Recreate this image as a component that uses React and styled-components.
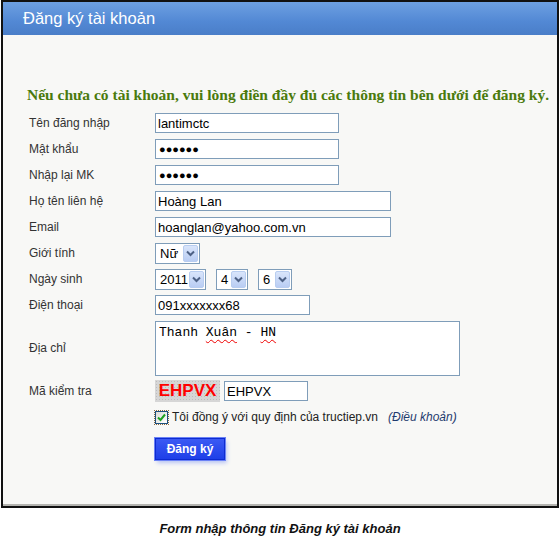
import React from 'react';
import styled, { createGlobalStyle } from 'styled-components';

const GlobalStyle = createGlobalStyle`
  body {
    margin: 0;
    background: #ffffff;
    font-family: "Liberation Sans", Arial, sans-serif;
  }
`;

const Frame = styled.div`
  margin-left: 1px;
  width: 554px;
  height: 504px;
  border: 2px solid #111;
  background: #f8f8f6;
  box-shadow: inset 0 -2px 0 #b4b4b0;
  display: flex;
  flex-direction: column;
`;

const Header = styled.div`
  height: 33px;
  background: linear-gradient(#6da0e2, #5288d4 60%, #4a7ec8);
  display: flex;
  align-items: center;
  padding-left: 20px;
  color: #fff;
  font-size: 16.5px;
`;

const Body = styled.div`
  padding: 48px 0 0 24px;
  display: flex;
  flex-direction: column;
`;

const Intro = styled.div`
  font-family: "Liberation Serif", "Times New Roman", serif;
  font-weight: bold;
  font-size: 15.5px;
  color: #4a7a0c;
  height: 24px;
  line-height: 24px;
  margin-bottom: 3px;
`;

const Row = styled.div`
  display: flex;
  align-items: center;
  height: ${(p) => p.h || 26}px;
`;

const Label = styled.div`
  width: 126px;
  padding-left: 2px;
  font-size: 12px;
  color: #333;
`;

const Field = styled.div`
  display: flex;
  align-items: center;
  gap: ${(p) => p.gap || 0}px;
`;

const Input = styled.div`
  box-sizing: border-box;
  width: ${(p) => p.w}px;
  height: 20px;
  border: 1px solid #7f9db9;
  background: #fff;
  padding-left: 2px;
  font-size: 13px;
  color: #000;
  display: flex;
  align-items: center;
  white-space: nowrap;
`;

const Dots = styled.span`
  font-size: 11px;
  padding-left: 1px;
`;

const Area = styled.div`
  box-sizing: border-box;
  width: 305px;
  height: 55px;
  border: 1px solid #7f9db9;
  background: #fff;
  padding: 3px 0 0 3px;
  font-family: "Liberation Mono", "Courier New", monospace;
  font-size: 13px;
  color: #000;
`;

const Spell = styled.span`
  text-decoration: underline wavy #e00;
  text-underline-offset: 3px;
  text-decoration-thickness: 1px;
`;

const Select = styled.div`
  box-sizing: border-box;
  width: ${(p) => p.w}px;
  height: 21px;
  border: 1px solid #7f9db9;
  background: #fff;
  display: flex;
  align-items: center;
  justify-content: space-between;
  padding: 1px;
  font-size: 13px;
  color: #000;
`;

const SelectText = styled.span`
  padding-left: 3px;
`;

const Arrow = styled.span`
  width: 15px;
  height: 17px;
  box-sizing: border-box;
  border: 1px solid #b8cdf0;
  border-radius: 2px;
  background: linear-gradient(#d9e5fb, #b9cdf3);
  display: flex;
  align-items: center;
  justify-content: center;
`;

const Captcha = styled.div`
  width: 65px;
  height: 22px;
  background-color: #d6d6d6;
  background-image: radial-gradient(#bdbdbd 0.8px, transparent 0.9px);
  background-size: 3px 3px;
  color: #f00;
  font-weight: bold;
  font-size: 17px;
  display: flex;
  align-items: center;
  justify-content: center;
`;

const Agree = styled.label`
  display: flex;
  align-items: center;
  font-size: 12px;
  color: #222;
`;

const Box = styled.span`
  width: 13px;
  height: 13px;
  box-sizing: border-box;
  border: 1px solid #1c5180;
  background: linear-gradient(135deg, #dcdcd6, #fff);
  outline: 1px dotted #8a6a40;
  display: flex;
  align-items: center;
  justify-content: center;
  margin-right: 4px;
`;

const Terms = styled.span`
  font-style: italic;
  color: #1f3b6e;
  margin-left: 10px;
`;

const Button = styled.button`
  width: 70px;
  height: 22px;
  border: 1px solid #0d2bd0;
  background: linear-gradient(#3b5af4, #1e3fe8);
  box-shadow: 0 0 0 1px #6b82f6, 2px 3px 4px #b8c4f4;
  color: #fff;
  font-family: "Liberation Sans", Arial, sans-serif;
  font-weight: bold;
  font-size: 12px;
  padding: 0;
  margin-top: 2px;
`;

const Caption = styled.div`
  text-align: center;
  font-style: italic;
  font-weight: bold;
  font-size: 13px;
  color: #111;
  margin-top: 13px;
`;

const Chevron = () => (
  <svg width="9" height="7" viewBox="0 0 9 7">
    <path d="M1 1.5 L4.5 5 L8 1.5" fill="none" stroke="#4d6185" strokeWidth="2" />
  </svg>
);

const Check = () => (
  <svg width="9" height="9" viewBox="0 0 9 9">
    <path d="M1 4.5 L3.5 7 L8 1.5" fill="none" stroke="#21a121" strokeWidth="2" />
  </svg>
);

const DropDown = ({ w, value }) => (
  <Select w={w}>
    <SelectText>{value}</SelectText>
    <Arrow>
      <Chevron />
    </Arrow>
  </Select>
);

export default function App() {
  return (
    <>
      <GlobalStyle />
      <Frame>
        <Header>Đăng ký tài khoản</Header>
        <Body>
          <Intro>Nếu chưa có tài khoản, vui lòng điền đầy đủ các thông tin bên dưới để đăng ký.</Intro>
          <Row>
            <Label>Tên đăng nhập</Label>
            <Input w={184}>lantimctc</Input>
          </Row>
          <Row>
            <Label>Mật khẩu</Label>
            <Input w={184}><Dots>●●●●●●</Dots></Input>
          </Row>
          <Row>
            <Label>Nhập lại MK</Label>
            <Input w={184}><Dots>●●●●●●</Dots></Input>
          </Row>
          <Row>
            <Label>Họ tên liên hệ</Label>
            <Input w={236}>Hoàng Lan</Input>
          </Row>
          <Row>
            <Label>Email</Label>
            <Input w={236}>hoanglan@yahoo.com.vn</Input>
          </Row>
          <Row>
            <Label>Giới tính</Label>
            <DropDown w={45} value="Nữ" />
          </Row>
          <Row>
            <Label>Ngày sinh</Label>
            <Field gap={10}>
              <DropDown w={51} value="2011" />
              <DropDown w={32} value="4" />
              <DropDown w={34} value="6" />
            </Field>
          </Row>
          <Row>
            <Label>Điện thoại</Label>
            <Input w={155}>091xxxxxxx68</Input>
          </Row>
          <Row h={60}>
            <Label>Địa chỉ</Label>
            <Area>
              Thanh <Spell>Xuân</Spell> - <Spell>HN</Spell>
            </Area>
          </Row>
          <Row>
            <Label>Mã kiểm tra</Label>
            <Field gap={4}>
              <Captcha>EHPVX</Captcha>
              <Input w={84}>EHPVX</Input>
            </Field>
          </Row>
          <Row>
            <Label />
            <Agree>
              <Box><Check /></Box>
              Tôi đồng ý với quy định của tructiep.vn
              <Terms>(Điều khoản)</Terms>
            </Agree>
          </Row>
          <Row h={36}>
            <Label />
            <Button>Đăng ký</Button>
          </Row>
        </Body>
      </Frame>
      <Caption>Form nhập thông tin Đăng ký tài khoản</Caption>
    </>
  );
}
